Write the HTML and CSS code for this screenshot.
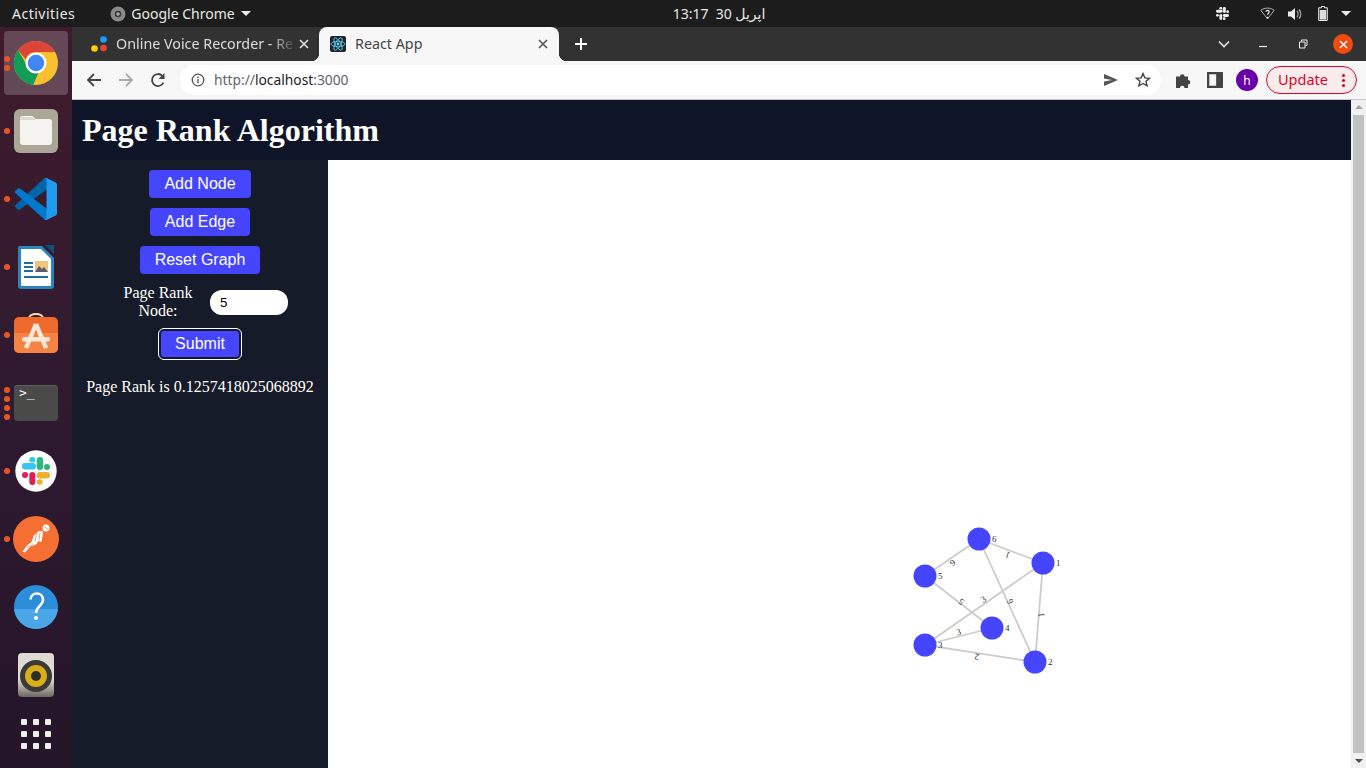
FILE: index.html
```html
<!DOCTYPE html>
<html lang="en">
<head>
    <meta charset="UTF-8">
    <meta name="viewport" content="width=device-width, initial-scale=1.0">
    <title>React App</title>
    <link rel="stylesheet" href="styles.css">
</head>
<body>
    <header class="topbar">
        <div class="topbar-left">
            <span class="activities">Activities</span>
            <span class="app-menu">
                <svg class="app-menu-icon" viewBox="0 0 16 16"><circle cx="8" cy="8" r="7.5" fill="#8a8a8a"/><circle cx="8" cy="8" r="3.2" fill="#333"/><circle cx="8" cy="8" r="1.8" fill="#aaa"/></svg>
                Google Chrome
                <i class="caret"></i>
            </span>
        </div>
        <div class="clock">13:17&nbsp; 30 اپریل</div>
        <div class="tray">
            <svg class="tray-slack" viewBox="8 8 28 28" fill="#eee">
                <rect x="8" y="14" width="14" height="6.500" rx="3.200"/><rect x="15.300" y="8" width="6" height="5.500" rx="2.700"/>
                <rect x="22.700" y="8" width="6.500" height="13" rx="3.200"/><rect x="30" y="15" width="6" height="6" rx="3"/>
                <rect x="22.700" y="23" width="13.300" height="6.500" rx="3.200"/><rect x="22.700" y="30.300" width="6" height="5.500" rx="2.700"/>
                <rect x="15.300" y="23" width="6" height="13" rx="3"/><rect x="8" y="23" width="6" height="6" rx="3"/>
            </svg>
            <svg class="tray-wifi" viewBox="0 0 16 14" fill="none" stroke="#bbb"><path d="M.8 3.6C4.8.4 11.200.4 15.200 3.600L8 12.800z"/><path d="M6.300 5.200c0-2.200 3.500-2.200 3.500 0 0 1.500-1.700 1.500-1.700 3.200" stroke="#eee" stroke-width="1.300"/><circle cx="8.100" cy="11.500" r=".9" fill="#eee" stroke="none"/></svg>
            <svg class="tray-sound" viewBox="0 0 15 14" fill="#eee"><path d="M0 4.500h3L7 1v12L3 9.500H0z"/><path d="M9 4c1.400 1.600 1.400 4.400 0 6M11 2.500c2.300 2.600 2.300 6.400 0 9" fill="none" stroke="#bbb" stroke-width="1.200"/></svg>
            <svg class="tray-battery" viewBox="0 0 10 15"><path d="M3.500.5h3v1.300h2.800v12.700H.700V1.800h2.800z" fill="none" stroke="#eee"/><rect x="1.700" y="4" width="6.600" height="9.600" fill="#ddd"/></svg>
            <i class="caret"></i>
        </div>
    </header>

    <div class="desktop">
        <nav class="dock">
            <div class="dock-item dock-item-active">
                <span class="pips"><i></i><i></i></span>
                <svg class="dock-icon" viewBox="0 0 48 48">
                    <circle cx="24" cy="24" r="24" fill="#fbc02d"/>
                    <path d="M24 0a24 24 0 0 1 20.800 12H24a12 12 0 0 0-11.300 8L4.500 10A24 24 0 0 1 24 0z" fill="#db4437"/>
                    <path d="M4.500 10l10.400 18a10.500 10.500 0 0 0 12 6L21 47.800A24 24 0 0 1 4.500 10z" fill="#0f9d58"/>
                    <circle cx="24" cy="24" r="11.500" fill="#fff"/>
                    <circle cx="24" cy="24" r="9" fill="#4285f4"/>
                </svg>
            </div>
            <div class="dock-item">
                <span class="pips"><i></i></span>
                <svg class="dock-icon" viewBox="0 0 44 44">
                    <rect x="0" y="0" width="44" height="44" rx="6" fill="#aca698"/>
                    <path d="M6 10a3 3 0 0 1 3-3h9l4 3h13a3 3 0 0 1 3 3v20a3 3 0 0 1-3 3H9a3 3 0 0 1-3-3z" fill="#f5f3ef"/>
                    <path d="M6 11a3 3 0 0 1 3-3h9l4 3z" fill="#dcd9d0"/>
                </svg>
            </div>
            <div class="dock-item">
                <span class="pips"><i></i></span>
                <svg class="dock-icon dock-icon-code" viewBox="0 0 100 100">
                    <path d="M96.46 10.8L75.85.88C73.47-.27 70.62.21 68.75 2.080L1.360 63.580C-.45 65.240-.45 68.090 1.360 69.750L6.870 74.750C8.360 76.100 10.590 76.200 12.190 74.990L93.360 13.420C96.090 11.350 100 13.290 100 16.700V16.460C100 14.050 98.620 11.840 96.460 10.800Z" fill="#0065a9"/>
                    <path d="M96.46 89.200L75.85 99.100C73.470 100.250 70.620 99.770 68.750 97.900L1.360 36.400C-.45 34.760-.45 31.900 1.360 30.250L6.870 25.250C8.360 23.900 10.590 23.800 12.190 25L93.360 86.580C96.090 88.650 100 86.700 100 83.300V83.540C100 85.950 98.620 88.160 96.460 89.200Z" fill="#007acc"/>
                    <path d="M75.85 99.130C73.470 100.270 70.630 99.790 68.750 97.920C71.060 100.230 75 98.590 75 95.320V4.670C75 1.400 71.060-.23 68.750 2.080C70.630.21 73.470-.27 75.850.87L96.460 10.780C98.620 11.820 100 14.010 100 16.410V83.580C100 85.980 98.620 88.170 96.460 89.210Z" fill="#1f9cf0"/>
                </svg>
            </div>
            <div class="dock-item">
                <span class="pips"><i></i></span>
                <svg class="dock-icon" viewBox="0 0 44 44">
                    <path d="M4 3a2 2 0 0 1 2-2h22l12 12v28a3 3 0 0 1-3 3H7a3 3 0 0 1-3-3z" fill="#2a85bd"/>
                    <path d="M31 0h9v9z" fill="#144f75"/>
                    <path d="M7 4h20l10 10v26a1 1 0 0 1-1 1H8a1 1 0 0 1-1-1z" fill="#fff"/>
                    <rect x="10" y="17" width="9" height="2" fill="#1b6fa8"/><rect x="10" y="21" width="9" height="2" fill="#1b6fa8"/><rect x="10" y="25" width="9" height="2" fill="#1b6fa8"/>
                    <rect x="10" y="31" width="24" height="2" fill="#1b6fa8"/>
                    <rect x="21" y="16" width="13" height="11" fill="#f1c57b"/>
                    <path d="M21 27l4-6 3 3 2-2 4 5z" fill="#56606a"/>
                </svg>
            </div>
            <div class="dock-item">
                <span class="pips"><i></i></span>
                <svg class="dock-icon" viewBox="0 0 44 44">
                    <path d="M15 5.500C15-.5 29-.5 29 5.500" fill="none" stroke="#f6dcb6" stroke-width="2"/>
                    <rect x="0" y="4" width="44" height="36" rx="5" fill="#ed6a2c"/>
                    <path d="M0 20h44v15a5 5 0 0 1-5 5H5a5 5 0 0 1-5-5z" fill="#f58344"/>
                    <path d="M22 11L12 35M22 11l10 24" fill="none" stroke="#fbe6d8" stroke-width="4.500"/>
                    <rect x="8" y="24" width="28" height="4.500" rx="2" fill="#fbe6d8"/>
                </svg>
            </div>
            <div class="dock-item">
                <span class="pips"><i></i><i></i><i></i><i></i></span>
                <div class="terminal"><span>&gt;_</span></div>
            </div>
            <div class="dock-item">
                <span class="pips"><i></i></span>
                <svg class="dock-icon" viewBox="0 0 44 44">
                    <circle cx="22" cy="22" r="20.700" fill="#fff"/>
                    <rect x="8" y="14" width="14" height="6.500" rx="3.200" fill="#36c5f0"/>
                    <rect x="15.300" y="8" width="6" height="5.500" rx="2.700" fill="#36c5f0"/>
                    <rect x="22.700" y="8" width="6.500" height="13" rx="3.200" fill="#2eb67d"/>
                    <rect x="30" y="15" width="6" height="6" rx="3" fill="#2eb67d"/>
                    <rect x="22.700" y="23" width="13.300" height="6.500" rx="3.200" fill="#ecb22e"/>
                    <rect x="22.700" y="30.300" width="6" height="5.500" rx="2.700" fill="#ecb22e"/>
                    <rect x="15.300" y="23" width="6" height="13" rx="3" fill="#e01e5a"/>
                    <rect x="8" y="23" width="6" height="6" rx="3" fill="#e01e5a"/>
                </svg>
            </div>
            <div class="dock-item">
                <span class="pips"><i></i></span>
                <svg class="dock-icon dock-icon-large" viewBox="0 0 46 46">
                    <circle cx="23" cy="23" r="23" fill="#f56f32"/>
                    <path d="M25 15.500L30 15 29.500 20 28.500 26 25.500 25 23 28.500 17.500 30.500 12 36.500 9.500 35.500 14.500 29 18.500 26 20.500 20Z" fill="#fff"/>
                    <path d="M24 17l-2 8M27 17l-1 7M20 28l-6 4" fill="none" stroke="#f56f32" stroke-width=".7"/>
                    <circle cx="33" cy="12" r="3.400" fill="#fff"/>
                    <path d="M31 10.500l4 3" stroke="#f56f32" stroke-width=".7"/>
                </svg>
            </div>
            <div class="dock-item">
                <svg class="dock-icon" viewBox="0 0 44 44">
                    <circle cx="22" cy="22" r="22" fill="#2a8ed8"/>
                    <path d="M0 24h43.900a22 22 0 0 1-43.800 0z" fill="#4aa6e6"/>
                    <path d="M16.500 14.500c.5-8 12.500-8 12.500.5 0 6-7 6-7 13" fill="none" stroke="#fff" stroke-width="2.600"/>
                    <circle cx="22" cy="33" r="2" fill="#fff"/>
                </svg>
            </div>
            <div class="dock-item">
                <svg class="dock-icon" viewBox="0 0 44 44">
                    <defs><linearGradient id="speaker" x1="0" y1="0" x2="0" y2="1"><stop offset=".6" stop-color="#dedbd2"/><stop offset="1" stop-color="#6d6662"/></linearGradient></defs>
                    <rect x="4" y="0" width="36" height="44" rx="4" fill="url(#speaker)"/>
                    <circle cx="22" cy="23" r="16" fill="#3a3a38"/>
                    <circle cx="22" cy="23" r="11" fill="#d9ae18"/>
                    <circle cx="22" cy="23" r="5" fill="#2d2d2a"/>
                </svg>
            </div>
            <div class="dock-item dock-item-apps">
                <div class="app-grid"><i></i><i></i><i></i><i></i><i></i><i></i><i></i><i></i><i></i></div>
            </div>
        </nav>

        <div class="browser">
            <div class="tabstrip">
                <div class="tab">
                    <svg class="favicon" viewBox="0 0 16 16"><circle cx="12.500" cy="3.500" r="3.300" fill="#1a9cff"/><circle cx="12.500" cy="12" r="3.300" fill="#ea4335"/><circle cx="3.500" cy="12.500" r="3.300" fill="#fbd000"/></svg>
                    <span class="tab-title tab-title-fade">Online Voice Recorder - Re</span>
                    <svg class="tab-close" viewBox="0 0 10 10"><path d="M1 1l8 8M9 1l-8 8" stroke="#e4e4e4" stroke-width="1.600"/></svg>
                </div>
                <div class="tab tab-active">
                    <svg class="favicon" viewBox="0 0 16 16"><rect width="16" height="16" rx="2" fill="#20232a"/><g fill="none" stroke="#61dafb" stroke-width=".8"><ellipse cx="8" cy="8" rx="7" ry="2.700"/><ellipse cx="8" cy="8" rx="7" ry="2.700" transform="rotate(60 8 8)"/><ellipse cx="8" cy="8" rx="7" ry="2.700" transform="rotate(120 8 8)"/></g><circle cx="8" cy="8" r="1.400" fill="#61dafb"/></svg>
                    <span class="tab-title">React App</span>
                    <svg class="tab-close" viewBox="0 0 10 10"><path d="M1 1l8 8M9 1l-8 8" stroke="#555" stroke-width="1.600"/></svg>
                </div>
                <svg class="new-tab" viewBox="0 0 12 12"><path d="M6 0v12M0 6h12" stroke="#fff" stroke-width="2"/></svg>
                <div class="window-controls">
                    <svg class="tab-search" viewBox="0 0 12 8"><path d="M1 1.500l5 5 5-5" fill="none" stroke="#e8e8e8" stroke-width="1.600"/></svg>
                    <svg class="win-btn" viewBox="0 0 10 10"><path d="M1 7.500h8" stroke="#eee" stroke-width="1.200"/></svg>
                    <svg class="win-btn" viewBox="0 0 10 10"><path d="M3.500 2.500V1h5.500v5.500H7.500M1.500 3h5.500v6H1.500z" fill="none" stroke="#eee"/></svg>
                    <span class="win-close"><svg viewBox="0 0 10 10"><path d="M1 1l8 8M9 1l-8 8" stroke="#fff" stroke-width="1.600"/></svg></span>
                </div>
            </div>

            <div class="toolbar">
                <svg class="tool-icon" viewBox="0 0 16 16"><path d="M15 8H2M8 2L2 8l6 6" fill="none" stroke="#444" stroke-width="1.800"/></svg>
                <svg class="tool-icon" viewBox="0 0 16 16"><path d="M1 8h13M8 2l6 6-6 6" fill="none" stroke="#aaa" stroke-width="1.800"/></svg>
                <svg class="tool-icon" viewBox="0 0 16 16"><path d="M13.500 10.500A6 6 0 1 1 12.300 3.800" fill="none" stroke="#444" stroke-width="1.800"/><path d="M14.500 1v6h-6z" fill="#444"/></svg>
                <div class="omnibox">
                    <svg class="info-icon" viewBox="0 0 14 14"><circle cx="7" cy="7" r="5.800" fill="none" stroke="#555" stroke-width="1.300"/><rect x="6.300" y="6" width="1.400" height="4.200" fill="#555"/><rect x="6.300" y="3.600" width="1.400" height="1.400" fill="#555"/></svg>
                    <span class="url"><span class="url-dim">http://</span>localhost<span class="url-dim">:3000</span></span>
                    <svg class="omni-icon omni-send" viewBox="0 0 16 12"><path d="M1 0l14 6L1 12l0-4.500 8-1.500-8-1.500z" fill="#555"/></svg>
                    <svg class="omni-icon" viewBox="0 0 16 16"><path d="M8 1.600l1.900 4.300 4.600.4-3.500 3 1.100 4.600L8 11.500l-4.100 2.400L5 9.300l-3.500-3 4.600-.4z" fill="none" stroke="#444" stroke-width="1.400"/></svg>
                </div>
                <svg class="ext-icon" viewBox="0 0 16 16"><path d="M0 4.500h4a2.300 2.300 0 1 1 4.600 0H12v3.500a2.300 2.300 0 1 1 0 4.600V16H8.500a2.300 2.300 0 1 0-4.600 0H0z" fill="#444"/></svg>
                <svg class="ext-icon" viewBox="0 0 14 14"><rect x="1" y="1" width="12" height="12" fill="none" stroke="#444" stroke-width="2"/><rect x="8" y="1" width="5" height="12" fill="#444"/></svg>
                <span class="avatar">h</span>
                <span class="update">Update<i class="update-dots"></i></span>
            </div>

            <div class="viewport">
                <div class="page">
                    <h1 class="page-title">Page Rank Algorithm</h1>
                    <div class="page-body">
                        <aside class="sidebar">
                            <button class="btn">Add Node</button>
                            <button class="btn">Add Edge</button>
                            <button class="btn">Reset Graph</button>
                            <div class="rank-form">
                                <label class="rank-label" for="rank-node">Page Rank Node:</label>
                                <input class="rank-input" id="rank-node" type="text" value="5">
                            </div>
                            <button class="btn btn-focus">Submit</button>
                            <p class="rank-result">Page Rank is 0.1257418025068892</p>
                        </aside>
                        <main class="graph">
                            <svg class="graph-svg" viewBox="328 160 1023 608">
                                <g class="edges">
                                    <line x1="925" y1="576" x2="979" y2="539"/>
                                    <line x1="979" y1="539" x2="1043" y2="563"/>
                                    <line x1="925" y1="576" x2="992" y2="628"/>
                                    <line x1="1043" y1="563" x2="925" y2="645"/>
                                    <line x1="979" y1="539" x2="1035" y2="662"/>
                                    <line x1="1043" y1="563" x2="1035" y2="662"/>
                                    <line x1="925" y1="645" x2="992" y2="628"/>
                                    <line x1="925" y1="645" x2="1035" y2="662"/>
                                </g>
                                <g class="nodes">
                                    <circle cx="1043" cy="563" r="11.500"/>
                                    <circle cx="1035" cy="662" r="11.500"/>
                                    <circle cx="925" cy="645" r="11.500"/>
                                    <circle cx="992" cy="628" r="11.500"/>
                                    <circle cx="925" cy="576" r="11.500"/>
                                    <circle cx="979" cy="539" r="11.500"/>
                                </g>
                                <g class="node-labels">
                                    <text x="1056" y="566">1</text>
                                    <text x="1048" y="665">2</text>
                                    <text x="938" y="648">3</text>
                                    <text x="1005" y="631">4</text>
                                    <text x="938" y="579">5</text>
                                    <text x="992" y="542">6</text>
                                </g>
                                <g class="edge-labels">
                                    <text transform="translate(952 562) rotate(145)">6</text>
                                    <text transform="translate(1008 554) rotate(200)">1</text>
                                    <text transform="translate(962 601) rotate(218)">5</text>
                                    <text transform="translate(984 600) rotate(-35)">3</text>
                                    <text transform="translate(1011 601) rotate(245)">6</text>
                                    <text transform="translate(1042 615) rotate(265)">1</text>
                                    <text transform="translate(959 633) rotate(-14)">3</text>
                                    <text transform="translate(977 656) rotate(189)">2</text>
                                </g>
                            </svg>
                        </main>
                    </div>
                </div>
                <div class="scrollbar">
                    <i class="scroll-up"></i>
                    <div class="scroll-thumb"></div>
                    <i class="scroll-down"></i>
                </div>
            </div>
        </div>
    </div>
</body>
</html>
```

FILE: styles.css
```css
* {
    box-sizing: border-box;
}
html, body {
    margin: 0;
    height: 100%;
    overflow: hidden;
}
body {
    width: 1366px;
    height: 768px;
    display: flex;
    flex-direction: column;
    font-family: "Noto Sans", "DejaVu Sans", sans-serif;
    background: #2c1a2e;
}

/* gnome top bar */
.topbar {
    height: 27px;
    flex: none;
    background: #1c1c1c;
    color: #e8e8e8;
    font-size: 14px;
    display: grid;
    grid-template-columns: 1fr auto 1fr;
    align-items: center;
}
.topbar-left {
    display: flex;
    align-items: center;
}
.activities {
    margin-left: 12px;
    letter-spacing: 0.5px;
}
.app-menu {
    margin-left: 35px;
    display: flex;
    align-items: center;
    gap: 5px;
}
.app-menu-icon {
    width: 16px;
    height: 16px;
}
.app-menu .caret {
    margin-left: 1px;
}
.caret {
    display: inline-block;
    margin-left: 6px;
    border-left: 5px solid transparent;
    border-right: 5px solid transparent;
    border-top: 5px solid #eee;
}
.clock {
    padding-left: 72px;
    letter-spacing: 0.4px;
}
.tray {
    display: flex;
    align-items: center;
    justify-content: flex-end;
    padding-right: 15px;
}
.tray-slack {
    width: 13px;
    height: 13px;
    margin-right: 31px;
}
.tray-wifi {
    width: 15px;
    height: 13px;
    margin-right: 13px;
}
.tray-sound {
    width: 15px;
    height: 14px;
    margin-right: 15px;
}
.tray-battery {
    width: 10px;
    height: 15px;
    margin-right: 7px;
}

.desktop {
    flex: 1;
    display: flex;
    min-height: 0;
}

/* launcher */
.dock {
    width: 72px;
    flex: none;
    padding-top: 2px;
    background: linear-gradient(180deg, #3f1b2c 0%, #2f1a30 50%, #241529 100%);
}
.dock-item {
    height: 68px;
    position: relative;
    display: flex;
    align-items: center;
    justify-content: center;
}
.dock-item-apps {
    height: 59px;
    padding-bottom: 9px;
}
.dock-item-active::before {
    content: "";
    position: absolute;
    left: 4px;
    top: 2px;
    width: 64px;
    height: 64px;
    border-radius: 4px;
    background: rgba(255, 255, 255, 0.2);
}
.dock-icon {
    width: 44px;
    height: 44px;
    position: relative;
}
.dock-icon-large {
    width: 46px;
    height: 46px;
}
.dock-icon-code {
    width: 42px;
    height: 42px;
}
.pips {
    position: absolute;
    left: 4px;
    top: 0;
    bottom: 0;
    display: flex;
    flex-direction: column;
    justify-content: center;
    gap: 3px;
    z-index: 1;
}
.pips i {
    width: 6px;
    height: 6px;
    border-radius: 50%;
    background: #e95420;
}
.terminal {
    width: 44px;
    height: 36px;
    border-radius: 4px;
    background: #4a4a48;
    box-shadow: inset 0 1px 0 #5e5e5c;
    color: #f6f6f6;
    font-family: "DejaVu Sans Mono", monospace;
    font-size: 13px;
    line-height: 14px;
    padding: 1px 5px;
}
.app-grid {
    display: grid;
    grid-template-columns: repeat(3, 6px);
    gap: 6px;
}
.app-grid i {
    width: 6px;
    height: 6px;
    border-radius: 1px;
    background: #eeeeee;
}

/* chrome */
.browser {
    flex: 1;
    min-width: 0;
    display: flex;
    flex-direction: column;
}
.tabstrip {
    height: 34px;
    flex: none;
    background: #333233;
    display: flex;
    align-items: center;
    padding-left: 8px;
}
.tab {
    width: 239px;
    height: 34px;
    position: relative;
    display: flex;
    align-items: center;
    padding: 0 10px 0 11px;
    color: #dcdcdc;
    font-size: 14.3px;
    border-radius: 8px 8px 0 0;
}
.tab-active {
    width: 240px;
    background: #f7f7f7;
    color: #444;
    padding: 0 11px 0 11px;
}
.tab-active::before, .tab-active::after {
    content: "";
    position: absolute;
    bottom: 0;
    width: 8px;
    height: 8px;
}
.tab-active::before {
    left: -8px;
    background: radial-gradient(circle at 0 0, transparent 8px, #f7f7f7 8.5px);
}
.tab-active::after {
    right: -8px;
    background: radial-gradient(circle at 100% 0, transparent 8px, #f7f7f7 8.5px);
}
.favicon {
    width: 16px;
    height: 16px;
    flex: none;
    margin-right: 9px;
}
.tab-title {
    flex: 1;
    min-width: 0;
    white-space: nowrap;
    padding-bottom: 2px;
}
.tab-title-fade {
    -webkit-mask-image: linear-gradient(90deg, #000 84%, rgba(0, 0, 0, 0.15) 97%);
    mask-image: linear-gradient(90deg, #000 84%, rgba(0, 0, 0, 0.15) 97%);
}
.tab-close {
    width: 10px;
    height: 10px;
    flex: none;
}
.new-tab {
    width: 12px;
    height: 12px;
    margin-left: 16px;
}
.window-controls {
    margin-left: auto;
    height: 34px;
    display: flex;
    align-items: center;
    padding-right: 13px;
}
.tab-search {
    width: 12px;
    height: 8px;
    margin-right: 28px;
}
.win-btn {
    width: 10px;
    height: 10px;
    margin-right: 30px;
}
.win-btn + .win-btn {
    margin-right: 25px;
}
.win-close {
    width: 20px;
    height: 20px;
    border-radius: 50%;
    background: #f04a0f;
    display: flex;
    align-items: center;
    justify-content: center;
}
.win-close svg {
    width: 9px;
    height: 9px;
}
.toolbar {
    height: 39px;
    flex: none;
    background: #f7f7f7;
    border-bottom: 1px solid #c9c9c9;
    display: flex;
    align-items: center;
    padding-left: 14px;
}
.tool-icon {
    width: 16px;
    height: 16px;
    margin-right: 16px;
}
.omnibox {
    width: 981px;
    height: 30px;
    margin-left: -2px;
    border-radius: 15px;
    background: #fff;
    display: flex;
    align-items: center;
    padding: 0 10px 0 11px;
    font-size: 13.8px;
}
.info-icon {
    width: 14px;
    height: 14px;
    margin-right: 9px;
}
.url {
    flex: 1;
    color: #1d1d1f;
    padding-bottom: 2px;
}
.url-dim {
    color: #5f6368;
}
.omni-icon {
    width: 16px;
    height: 16px;
    margin-left: 16px;
}
.omni-send {
    height: 12px;
}
.ext-icon {
    width: 16px;
    height: 16px;
    margin-left: 15px;
}
.ext-icon + .ext-icon {
    margin-left: 15px;
}
.avatar {
    width: 22px;
    height: 22px;
    margin-left: 13px;
    border-radius: 50%;
    background: #6a00a8;
    color: #fff;
    font-size: 12px;
    display: flex;
    align-items: center;
    justify-content: center;
}
.update {
    width: 91px;
    height: 28px;
    margin-left: 8px;
    border: 1px solid #d9042b;
    border-radius: 14px;
    background: #fcebeb;
    color: #d9042b;
    font-size: 14.5px;
    display: flex;
    align-items: center;
    padding: 0 0 2px 11px;
    position: relative;
}
.update-dots {
    position: absolute;
    right: 11px;
    top: 7px;
    width: 3px;
    height: 3px;
    border-radius: 50%;
    background: #d9042b;
    box-shadow: 0 5px 0 #d9042b, 0 10px 0 #d9042b;
}

/* page */
.viewport {
    flex: 1;
    min-height: 0;
    display: flex;
    background: #fff;
}
.page {
    flex: 1;
    min-width: 0;
    display: flex;
    flex-direction: column;
}
.page-title {
    margin: 0;
    height: 60px;
    flex: none;
    background: #0f1529;
    color: #fff;
    font-family: "Liberation Serif", serif;
    font-size: 32px;
    font-weight: bold;
    line-height: 60px;
    padding-left: 10px;
}
.page-body {
    flex: 1;
    min-height: 0;
    display: flex;
}
.sidebar {
    width: 256px;
    flex: none;
    background: #151b28;
    display: flex;
    flex-direction: column;
    align-items: center;
    padding-top: 10px;
    font-family: "Liberation Serif", serif;
    font-size: 16px;
    color: #fff;
}
.btn {
    height: 28px;
    margin-bottom: 10px;
    padding: 0 15px;
    border: none;
    border-radius: 4px;
    background: #4545ff;
    color: #fff;
    font-family: "Liberation Sans", sans-serif;
    font-size: 16px;
}
.btn-focus {
    width: 82px;
    height: 30px;
    margin-bottom: 0;
    padding: 0;
    border: 2px solid #151b28;
    border-radius: 5px;
    outline: 1px solid #fff;
}
.rank-form {
    align-self: flex-start;
    margin-left: 50px;
    margin-bottom: 9px;
    display: flex;
    align-items: center;
    gap: 16px;
}
.rank-label {
    width: 72px;
    text-align: center;
    line-height: 18px;
}
.rank-input {
    width: 78px;
    height: 25px;
    border: none;
    border-radius: 12px;
    padding: 0 10px;
    background: #fff;
    color: #000;
    font-family: "Liberation Sans", sans-serif;
    font-size: 13.333px;
}
.rank-result {
    margin: 19px 0 0;
    line-height: 18px;
}
.graph {
    flex: 1;
    min-width: 0;
    position: relative;
}
.graph-svg {
    position: absolute;
    inset: 0;
    width: 100%;
    height: 100%;
}
.edges line {
    stroke: #ccc;
    stroke-width: 1.8;
}
.nodes circle {
    fill: #4545ff;
}
.node-labels text, .edge-labels text {
    font-family: "Liberation Serif", serif;
    font-size: 9px;
    fill: #333;
}
.edge-labels text {
    text-anchor: middle;
    dominant-baseline: middle;
}
.scrollbar {
    width: 15px;
    flex: none;
    background: #f1f1f1;
    display: flex;
    flex-direction: column;
    align-items: center;
    padding: 5px 0;
}
.scrollbar .scroll-up {
    border-left: 4px solid transparent;
    border-right: 4px solid transparent;
    border-bottom: 4px solid #a3a3a3;
    margin-bottom: 6px;
}
.scroll-thumb {
    width: 11px;
    flex: 1;
    background: #c1c1c1;
}
.scrollbar .scroll-down {
    border-left: 4px solid transparent;
    border-right: 4px solid transparent;
    border-top: 4px solid #505050;
    margin-top: 6px;
}
```
